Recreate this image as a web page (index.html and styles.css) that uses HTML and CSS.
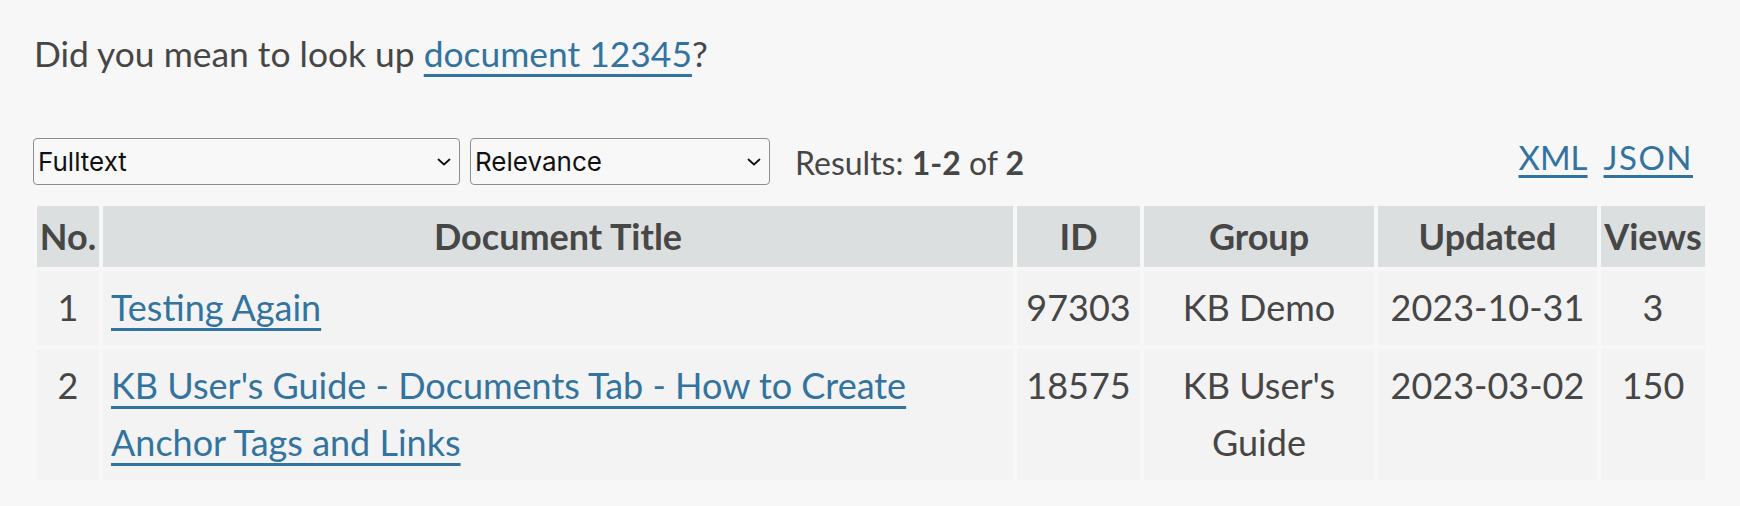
FILE: index.html
```html
<!DOCTYPE html>
<html lang="en">
<head>
<meta charset="utf-8">
<title>Search results</title>
<link rel="stylesheet" href="styles.css">
</head>
<body>
<div class="page">
  <p class="suggest">Did you mean to look up <a href="#">document 12345</a>?</p>
  <div class="toolbar">
    <div class="select-wrap sel-type">
      <select class="sel"><option>Fulltext</option></select>
      <svg class="chev" width="14" height="8" viewBox="0 0 14 8"><path d="M1.5 1.5 L7 6.5 L12.5 1.5" fill="none" stroke="#111" stroke-width="1.8" stroke-linecap="round" stroke-linejoin="round"/></svg>
    </div>
    <div class="select-wrap sel-sort">
      <select class="sel"><option>Relevance</option></select>
      <svg class="chev" width="14" height="8" viewBox="0 0 14 8"><path d="M1.5 1.5 L7 6.5 L12.5 1.5" fill="none" stroke="#111" stroke-width="1.8" stroke-linecap="round" stroke-linejoin="round"/></svg>
    </div>
    <div class="results">Results: <b>1-2</b> of <b>2</b></div>
    <div class="formats"><a href="#">XML</a><a href="#" class="json">JSON</a></div>
  </div>
  <table class="results-table">
    <colgroup>
      <col class="c-no"><col class="c-title"><col class="c-id"><col class="c-group"><col class="c-upd"><col class="c-views">
    </colgroup>
    <thead>
      <tr><th>No.</th><th>Document Title</th><th>ID</th><th>Group</th><th>Updated</th><th>Views</th></tr>
    </thead>
    <tbody>
      <tr><td class="num">1</td><td class="title"><a href="#">Testing Again</a></td><td>97303</td><td>KB Demo</td><td>2023-10-31</td><td>3</td></tr>
      <tr><td class="num">2</td><td class="title"><a href="#">KB User's Guide - Documents Tab - How to Create Anchor Tags and Links</a></td><td>18575</td><td>KB User's Guide</td><td>2023-03-02</td><td>150</td></tr>
    </tbody>
  </table>
</div>
</body>
</html>
```
FILE: styles.css
```css
html, body {
  margin: 0;
  padding: 0;
  background: #f7f7f7;
}
body {
  font-family: "Lato", "Noto Sans", sans-serif;
  color: #464646;
}
.page {
  padding: 0 31px 0 33px;
}
a {
  color: #32739f;
  text-decoration: underline;
  text-decoration-thickness: 3px;
  text-underline-offset: 7px;
}
.suggest {
  margin: 0;
  padding-top: 30px;
  font-size: 35.4px;
  line-height: 48px;
  padding-left: 1px;
}
.toolbar {
  display: flex;
  align-items: center;
  margin-top: 60px;
  height: 47px;
}
.select-wrap {
  position: relative;
  height: 47px;
  margin-right: 10px;
}
.sel-type { width: 427px; }
.sel-sort { width: 300px; margin-right: 25px; }
.sel {
  appearance: none;
  -webkit-appearance: none;
  width: 100%;
  height: 47px;
  box-sizing: border-box;
  border: 1px solid #8e8e8e;
  border-radius: 4px;
  background: #f8f8f8;
  font-family: "Inter", "Liberation Sans", sans-serif;
  font-size: 26px;
  color: #111;
  padding: 0 30px 0 4px;
  margin: 0;
}
.chev {
  position: absolute;
  right: 9px;
  top: 20px;
  pointer-events: none;
}
.results {
  font-size: 32px;
  flex: 1;
  padding-top: 2px;
}
.results b { font-weight: 700; }
.formats {
  display: flex;
  gap: 16px;
  padding-right: 16px;
  font-size: 33px;
  margin-top: -10px;
}
.formats a {
  text-underline-offset: 5px;
}
.formats .json {
  letter-spacing: 1.5px;
}
.results-table {
  width: 100%;
  table-layout: fixed;
  border-collapse: separate;
  border-spacing: 4px;
  margin-top: 17px;
  font-size: 36px;
}
.c-no { width: 62px; }
.c-title { width: 910px; }
.c-id { width: 123px; }
.c-group { width: 230px; }
.c-upd { width: 219px; }
.c-views { width: 104px; }
.results-table th {
  background: #dcdfe0;
  font-weight: 700;
  text-align: center;
  padding: 8px 1px;
  line-height: 45px;
  white-space: nowrap;
  color: #474747;
}
.results-table td {
  background: #f3f3f3;
  text-align: center;
  vertical-align: top;
  padding: 8px 3px;
  line-height: 57.5px;
}
.results-table td.title {
  text-align: left;
  padding-left: 8px;
}
```
